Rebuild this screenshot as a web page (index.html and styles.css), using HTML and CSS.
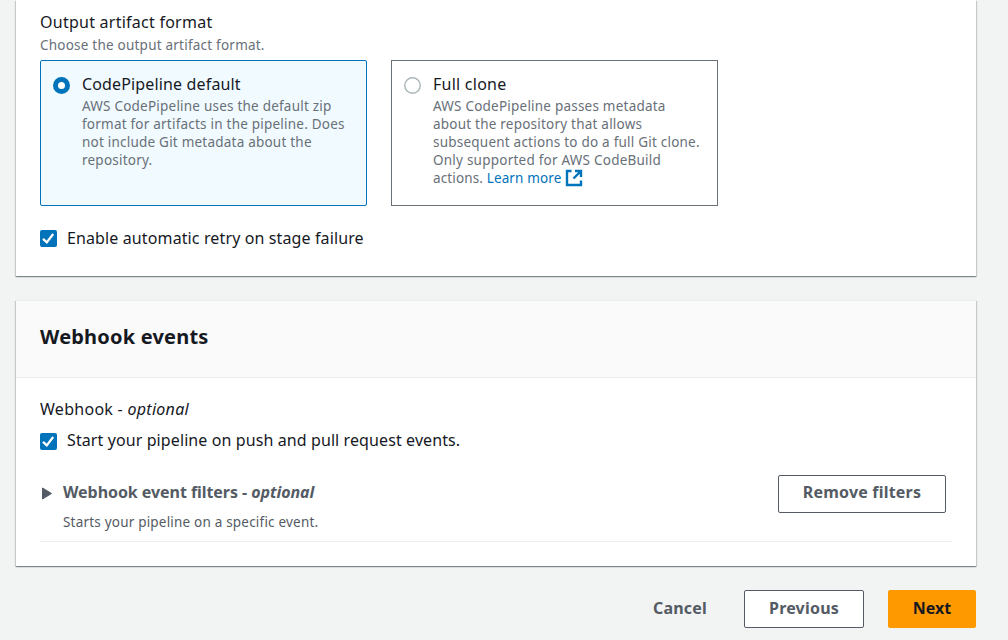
FILE: index.html
```html
<!DOCTYPE html>
<html lang="en">
<head>
<meta charset="utf-8">
<title>Add source stage</title>
<link rel="stylesheet" href="styles.css">
</head>
<body>
<main class="page">
  <section class="panel source">
    <div class="label"><span class="t-output">Output artifact format</span></div>
    <div class="hint">Choose the output artifact format.</div>
    <div class="tiles">
      <label class="tile selected">
        <span class="radio on"></span>
        <span class="tile-text">
          <span class="label"><span class="t-default">CodePipeline default</span></span>
          <span class="desc">AWS CodePipeline uses the default zip<br>format for artifacts in the pipeline. Does<br>not include Git metadata about the<br>repository.</span>
        </span>
      </label>
      <label class="tile">
        <svg class="radio-off" viewBox="0 0 17 17"><circle cx="8.5" cy="8.5" r="7.75"/></svg>
        <span class="tile-text">
          <span class="label"><span class="t-clone">Full clone</span></span>
          <span class="desc">AWS CodePipeline passes metadata<br>about the repository that allows<br>subsequent actions to do a full Git clone.<br><span class="d8">Only supported for AWS CodeBuild</span><br><span class="d9">actions. <a class="link">Learn more</a></span><svg class="external" viewBox="0 0 18 18"><path d="M6.5 2H2v14h14v-4.5M10 2h6v6M16 2l-7.5 7.5"/></svg></span>
        </span>
      </label>
    </div>
    <label class="check-row retry">
      <svg class="checkbox" viewBox="0 0 17 17"><rect width="17" height="17" rx="2"/><path d="M3 8.8l3.8 3.6L13.2 4"/></svg>
      <span class="t-retry">Enable automatic retry on stage failure</span>
    </label>
  </section>

  <section class="panel webhook">
    <header class="panel-header"><h2>Webhook events</h2></header>
    <div class="panel-body">
      <div class="label"><span class="t-webhook">Webhook - <i>optional</i></span></div>
      <label class="check-row start">
        <svg class="checkbox" viewBox="0 0 17 17"><rect width="17" height="17" rx="2"/><path d="M3 8.8l3.8 3.6L13.2 4"/></svg>
        <span class="t-start">Start your pipeline on push and pull request events.</span>
      </label>
      <div class="filters">
        <svg class="caret" viewBox="0 0 11 13"><path d="M1.5 1v11l9-5.5z"/></svg>
        <div class="filters-text">
          <div class="filters-title">Webhook event filters - <i>optional</i></div>
          <div class="filters-desc">Starts your pipeline on a specific event.</div>
        </div>
        <button class="button remove">Remove filters</button>
      </div>
    </div>
  </section>

  <footer class="actions">
    <button class="button plain">Cancel</button>
    <button class="button previous">Previous</button>
    <button class="button primary">Next</button>
  </footer>
</main>
</body>
</html>
```
FILE: styles.css
```css
* { box-sizing: border-box; }
body {
  margin: 0;
  height: 640px;
  overflow: hidden;
  background: #f2f3f3;
  color: #16191f;
  font: 16px/22px "Noto Sans", "Open Sans", sans-serif;
  white-space: nowrap;
}
.page { width: 960px; margin-left: 16px; }
.panel {
  background: #fff;
  box-shadow: 0 1px 1px 0 rgba(0, 28, 36, .3), 1px 1px 1px 0 rgba(0, 28, 36, .15), -1px 1px 1px 0 rgba(0, 28, 36, .15);
}
.source { height: 276px; padding: 11px 24px 0; }
.label { display: block; height: 22px; }
.hint, .desc, .filters-desc { font-size: 13.5px; line-height: 18px; letter-spacing: .22px; }
.hint { height: 27px; padding-top: 3px; color: #687078; }
.tiles { display: flex; gap: 24px; }
.tile {
  display: flex;
  width: 327px;
  height: 146px;
  padding: 12px 12px 0;
  border: 1px solid #687078;
}
.tile.selected { border-color: #0073bb; border-radius: 2px; background: #f1faff; }
.radio, .radio-off { width: 17px; height: 17px; margin: 4px 12px 0 0; }
.radio { border-radius: 50%; background: #fff; }
.radio.on { border: 5px solid #0073bb; }
.radio-off { fill: #fff; stroke: #aab7b8; stroke-width: 1.4; }
.tile-text { display: block; }
.desc { display: block; margin-top: 2px; color: #687078; }
.link { color: #0073bb; }
.external {
  width: 18px;
  height: 18px;
  margin-left: 4px;
  vertical-align: top;
  fill: none;
  stroke: #0073bb;
  stroke-width: 2.4;
}
.check-row { display: flex; align-items: center; gap: 10px; height: 22px; }
.retry { margin-top: 21px; }
.checkbox { width: 17px; height: 17px; fill: #0073bb; }
.checkbox path { fill: none; stroke: #fff; stroke-width: 2.3; }
.t-output, .t-clone { letter-spacing: .25px; }
.t-default { letter-spacing: .15px; }
.d8 { letter-spacing: .23px; }
.d9 { letter-spacing: .13px; }
.t-retry { letter-spacing: .12px; }
.t-webhook { letter-spacing: .28px; }
.t-start { padding-bottom: 2px; letter-spacing: .1px; }
.webhook { height: 266px; margin-top: 24px; border-top: 1px solid #eaeded; }
.panel-header { height: 77px; padding: 22px 24px 0; background: #fafafa; border-bottom: 1px solid #eaeded; }
h2 { margin: 0; font-size: 20px; line-height: 27px; font-weight: 700; letter-spacing: .2px; }
.panel-body { padding: 20px 24px 0; }
.start { margin-top: 10px; }
.filters { display: flex; height: 80px; width: 912px; margin-top: 10px; padding: 13px 6px 0 1px; border-bottom: 1px solid #eaeded; color: #545b64; }
.caret { width: 11px; height: 13px; margin: 12px 11px 0 0; fill: #545b64; stroke: #545b64; stroke-linejoin: round; }
.filters-text { flex: 1; padding-top: 6px; }
.filters-title { height: 22px; font-weight: 700; letter-spacing: -.06px; }
.filters-desc { margin-top: 10px; letter-spacing: .2px; }
.button {
  height: 38px;
  padding: 0 0 3px;
  border: 1px solid #545b64;
  border-radius: 2px;
  background: #fff;
  color: #545b64;
  font: 700 16px/22px "Noto Sans", "Open Sans", sans-serif;
  letter-spacing: .2px;
  white-space: nowrap;
}
.remove { width: 168px; padding-bottom: 4px; }
.actions { display: flex; justify-content: flex-end; margin-top: 24px; }
.plain { width: 98px; margin-right: 15px; border-color: transparent; background: transparent; }
.previous { width: 120px; margin-right: 24px; }
.primary { width: 88px; border-color: #f90; background: #f90; color: #16191f; letter-spacing: 0; }
```
